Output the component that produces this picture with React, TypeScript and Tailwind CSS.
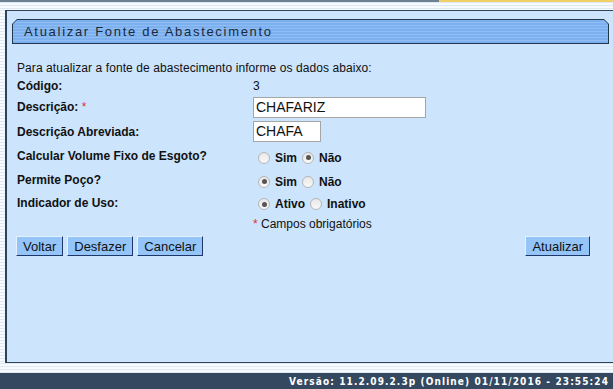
import React from 'react';

const stripes = 'bg-[repeating-linear-gradient(180deg,#dfe9f3_0px,#dfe9f3_1px,#f7fbff_1px,#f7fbff_3px)]';

const Radio = ({ checked, label }: { checked?: boolean; label: string }) => (
  <span className="flex items-center mr-[5px]">
    <span className="w-[12px] h-[12px] rounded-full border border-[#b5b5b5] bg-gradient-to-b from-[#e8e8e8] to-[#f8f8f8] flex items-center justify-center mr-[5px]">
      {checked && <span className="w-[5px] h-[5px] rounded-full bg-[#555]" />}
    </span>
    <span className="font-bold text-[12px]">{label}</span>
  </span>
);

const Btn = ({ children }: { children: React.ReactNode }) => (
  <button className="h-[20px] px-[6px] bg-[#95c4f8] border border-t-[#e6f1ff] border-l-[#e6f1ff] border-r-[#1d3868] border-b-[#1d3868] text-[13px] text-[#111] leading-none">
    {children}
  </button>
);

const Row = ({ label, req, children, h = 'h-[24px]' }: any) => (
  <div className={`flex items-center ${h}`}>
    <div className="w-[236px] font-bold">
      {label}
      {req && <span className="text-[#e03030] font-normal"> *</span>}
    </div>
    <div className="flex items-center">{children}</div>
  </div>
);

export default function App() {
  return (
    <div className="w-[613px] h-[389px] flex flex-col bg-white text-[12px] text-[#111] font-['Liberation_Sans',Arial,sans-serif] overflow-hidden">
      <div className="h-[2px] flex">
        <div className="w-[439px] bg-[#6d7f90]" />
        <div className="flex-1 bg-[#f2d068]" />
      </div>
      <div className={`h-[8px] ${stripes}`} />
      <div className="flex-1 flex">
        <div className={`w-[6px] ${stripes} border-r border-[#2e4358]`} />
        <div className="flex-1 bg-[#cce4fc] border-t border-b border-l border-[#2e4358] pl-[5px] pt-[8px] flex flex-col">
          <div className="mr-[4px] h-[25px] bg-[#22364c] [clip-path:polygon(5px_0,calc(100%-5px)_0,100%_5px,100%_100%,0_100%,0_5px)] p-[1px]">
            <div className="h-full bg-[repeating-linear-gradient(180deg,#7db0ee_0px,#7db0ee_2px,#90bdf3_2px,#90bdf3_3px)] [clip-path:polygon(4px_0,calc(100%-4px)_0,100%_4px,100%_100%,0_100%,0_4px)] flex items-center pl-[11px]">
              <span className="text-[13px] tracking-[1.7px] text-[#1a2a3a]">Atualizar Fonte de Abastecimento</span>
            </div>
          </div>
          <div className="pl-[5px] pt-[15px] pr-[23px]">
            <div className="h-[18px] flex items-center tracking-[0.08px]">Para atualizar a fonte de abastecimento informe os dados abaixo:</div>
            <Row label="Código:" h="h-[18px]">3</Row>
            <Row label="Descrição:" req>
              <div className="w-[173px] h-[21px] bg-white border border-[#a5a5a5] text-[14px] pl-[2px] flex items-center">CHAFARIZ</div>
            </Row>
            <Row label="Descrição Abreviada:" h="h-[25px]">
              <div className="w-[68px] h-[21px] bg-white border border-[#a5a5a5] text-[14px] pl-[2px] flex items-center">CHAFA</div>
            </Row>
            <Row label="Calcular Volume Fixo de Esgoto?">
              <span className="flex items-center pl-[5px] pt-[3px]"><Radio label="Sim" /><Radio checked label="Não" /></span>
            </Row>
            <Row label="Permite Poço?">
              <span className="flex items-center pl-[5px] pt-[3px]"><Radio checked label="Sim" /><Radio label="Não" /></span>
            </Row>
            <Row label="Indicador de Uso:" h="h-[22px]">
              <span className="flex items-center pl-[5px] pt-[2px]"><Radio checked label="Ativo" /><Radio label="Inativo" /></span>
            </Row>
            <div className="h-[19px] flex items-center pl-[236px]">
              <span className="text-[#e03030]">*</span>&nbsp;Campos obrigatórios
            </div>
            <div className="flex justify-between items-center mt-[3px] -ml-[1px]">
              <div className="flex gap-[4px]">
                <Btn>Voltar</Btn>
                <Btn>Desfazer</Btn>
                <Btn>Cancelar</Btn>
              </div>
              <Btn>Atualizar</Btn>
            </div>
          </div>
        </div>
      </div>
      <div className={`h-[10px] ${stripes}`} />
      <div className="h-[16px] bg-[#34495f] flex items-center justify-end pr-[4px]">
        <span className="text-white font-bold text-[10px] tracking-[1.1px] font-['DejaVu_Sans_Condensed','DejaVu_Sans',sans-serif]">Versão: 11.2.09.2.3p (Online) 01/11/2016 - 23:55:24</span>
      </div>
    </div>
  );
}
